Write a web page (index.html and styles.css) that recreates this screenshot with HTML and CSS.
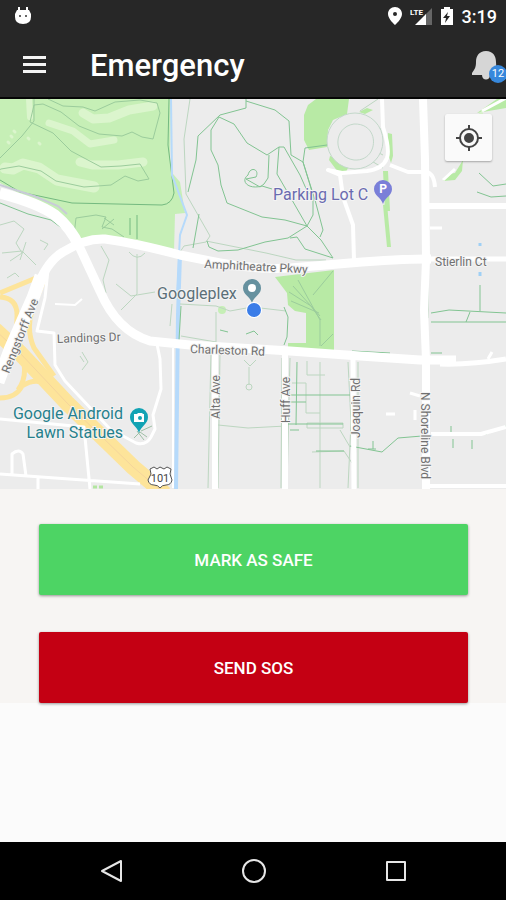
FILE: index.html
```html
<!DOCTYPE html>
<html lang="en">
<head>
  <meta charset="UTF-8">
  <meta name="viewport" content="width=device-width, initial-scale=1.0">
  <title>Emergency</title>
  <link rel="stylesheet" href="styles.css">
</head>
<body>
  <header>
    <div class="status">
      <svg class="droid" width="20" height="20" viewBox="0 0 20 20">
        <path d="M6 1v4M14 1v4" stroke="#fff" stroke-width="2"/>
        <path d="M4 4h12l2 4v3q0 7-8 7t-8-7V8z" fill="#fff"/>
        <circle cx="7" cy="10" r="1" fill="#333"/><circle cx="13" cy="10" r="1" fill="#333"/>
      </svg>
      <svg width="14" height="20" viewBox="0 0 14 20">
        <path d="M7 1C3 1 0 4 0 8c0 5 7 11 7 11s7-6 7-11c0-4-3-7-7-7zm0 5a2 2 0 1 1 0 4 2 2 0 0 1 0-4z" fill="#fff" fill-rule="evenodd"/>
      </svg>
      <svg class="signal" width="22" height="20" viewBox="0 0 22 20">
        <path d="M22 2v17H15V9z" fill="#666"/>
        <path d="M16 8v11H5z" fill="#fff"/>
        <text x="0" y="9">LTE</text>
      </svg>
      <svg width="14" height="20" viewBox="0 0 14 20">
        <path d="M4 1h6v2h3v16H1V3h3z" fill="#fff"/>
        <path d="M8 6l-5 6h3l-1 5 5-7H7z" fill="#262626"/>
      </svg>
      <span class="time">3:19</span>
    </div>
    <div class="toolbar">
      <button class="menu" aria-label="Menu"><i></i><i></i><i></i></button>
      <h1>Emergency</h1>
      <button class="bell" aria-label="Notifications">
        <svg width="28" height="30" viewBox="0 0 28 30">
          <path d="M14 1C7 1 4 6 4 12c0 5-1 7-4 11v2h10c0 6 8 6 8 0h10v-2c-3-3-4-6-4-11 0-6-3-11-10-11z" fill="#d6d6d6"/>
        </svg>
        <span class="badge">12</span>
      </button>
    </div>
  </header>

  <main>
    <div class="map">
      <svg class="tiles" viewBox="0 99 506 390">
        <rect y="99" width="506" height="390" fill="#ececec"/>

        <!-- parks -->
        <path d="M0 99h171l-1 60 3 15 7 8 5 31-10 1-1 38-40-9-34-6-23 4-8-17-16-14-31-15-22-12z" fill="#c6efb6"/>
        <g fill="#b8eaa5">
          <path d="M316 99h33l-2 15-14 6-5 10-1 17-18 3-5-10v-25l4-10z"/>
          <path d="M330 156l8 2 7 6h5l-4 8h-8l-9-12z"/>
          <path d="M275 277l59-7v81h-46v-8h18v-30l-11-2-7-6-1-12z"/>
          <path d="M359 112l8-4 6 2-8 4zM388 133l4 1 1 22-2 7-4-12zM383 171h5l2 40h-5zM383 205l4-1 4 43h-4z"/>
          <path d="M477 113l20-14h9v9zM463 160l-8 13-7 1-5 7 12-1 7-9z"/>
        </g>
        <path d="M468 128l14-18 4 14-12 6z" fill="#d9f3cd"/>
        <circle cx="222" cy="310" r="4" fill="#c6efb6"/>

        <!-- fairways -->
        <g fill="none" stroke="#dbf5cd" stroke-width="10" stroke-linecap="round" stroke-linejoin="round">
          <path d="M83 113l10 6 16-1 20-8 24-4" stroke-width="9"/>
          <path d="M49 123l24 8 17 13 24-4" stroke-width="7"/>
          <path d="M80 162l12 3h26l25-3" stroke-width="9"/>
          <path d="M5 168l8 1 10-5 16 4 18 12 37 7" stroke-width="11"/>
          <path d="M29 99l1 18" stroke-width="6"/>
          <path d="M8 142l1 1M11 136l1 1M14 131l1 1M28 138l1 1M39 143l1 1" stroke-width="3"/>
        </g>

        <!-- golf course outline and paths -->
        <g fill="none" stroke="#9bcc9c">
          <path d="M48 99l15 7 20 1 12 4 20-9 25-2 17 3 3 10-7 26-11-2-10-5-10 4-23-2-20-8-18-14-18-8-9 1-4 17 23 11 18 18 30 16 20-1 19-2 9 15-11 2-13-5-14 9-27 2-28-6-15-10-22-5-18 3-15 8M34 99v22l-12 15L0 158"/>
          <path d="M74 235l2-17 20-3 10 2-4 10 10 2 12 8M104 218l10 7M102 229l12-10"/>
          <path d="M289 292l22 14 10 14M291 301l28 12M293 286l27 30M298 280l22 40v26M333 271l-20 24M333 334l-12 12"/>
        </g>
        <path d="M0 180l20 12 52 11 90 2q10-1 12-12l-6-48 1-46M130 218v17M137 215v24" fill="none" stroke="#74ba80"/>

        <!-- waterways -->
        <path d="M171 99l1 76 15 40-7 20-3 60" fill="none" stroke="#b6dafb" stroke-width="2"/>
        <path d="M180 255l-2 60-2 174" fill="none" stroke="#b6dafb" stroke-width="4"/>

        <!-- foot paths, muted -->
        <g fill="none" stroke="#bcd6c0">
          <path d="M190 99l-6 40 2 55 24 42-4 6-22 4-8 12M206 241l60 12 30 7h30M0 225l14-4 10 8-8 14 6 10-12 8M2 253l20-2 14 14M20 260l6-18M40 240l8 4-4 6M7 278l8-5 4 4M101 246l8 14-6 20 3 13M137 254v40l-16 16M129 252q8 10 16 1M116 284l15 12 24-4M82 352l6 10-6 8M84 362l-4-6M172 304l-2 22"/>
          <path d="M180 304l36 2 14 5 22-4 34 4M216 312v32M181 336l35 6M211 352l-3 136M220 352l-2 136M282 358l-1 130M290 358l-3 130M244 360l6 6 6-6M249 367v18M218 425l30 3 38-2M348 362l3 60-3 66M358 362v126M292 383h14v30h14M307 361v14h18M320 362v126M307 428h36v-5h-36zM340 430l10 17M312 452l32-1 8 12"/>
          <path d="M373 129h8M375 151l8 4M370 160l13 8M360 111l18-12M428 280v38"/>
          <circle cx="249" cy="387" r="3"/>
        </g>
        <circle cx="355" cy="141" r="28" fill="#ececec" stroke="#c3d8ca"/>
        <path d="M354 124c-21 3-22 33 0 36 25 2 27-37 0-36z" fill="#ececec" stroke="#c3d8ca"/>

        <!-- foot paths, strong -->
        <g fill="none" stroke="#82c492">
          <path d="M246 99v9l-26 7-22 21-2 24-8 32M246 101l29 9 14 11 2 34 12 7 2-14 22-3M303 162l10 33v20l-6 11M303 162l12 38 8 30-3 7M219 117l15 7 13 19 20 12 12-8h5l16 28 8 18 5 2M219 117l-8 13v20l7 15 3 20 6 18 35 14 23 3 22 6M279 147l-2 27 30 52-19 12-23 4-27 8-20 1-9-4-2-6M307 226l14 14 12 18-28-9-8-12-7 1"/>
          <path d="M269 155l-1 23-4 6-4 3-14-8 10-2c4-8-6-11-8-2-8 6 0 15 14 11l10 3M199 214l-6 34M0 203l28 11 23 6 12 9"/>
          <path d="M284 307l4 10-1 20-3 8M181 306l-2 34M220 330l8 2M246 334l8-3 4 4M297 362l-1 63M290 395h60M290 402h16M316 451h28M350 446l32 6 16-14 24-2M373 441v8M368 449h8M431 313l18-3 57 3M431 322h75M470 312l-4 10M480 285v26M431 353h11M479 173l14 13 13-2M477 192l14 5 15-1M431 434h55l20-8M451 436v-10M453 439v9M472 440v9M288 424h55M290 430h9M352 351l38 2"/>
        </g>

        <!-- highway 101 -->
        <g fill="none" stroke="#fde49a" stroke-width="5">
          <path d="M0 293l36-15M0 297q18 1 17 20l-1 32M46 275l-14 35q-6 20 2 38l20 28M0 398q16 0 22-12 14-9 26-1l20 17M20 350q10 24-2 40"/>
          <path d="M-5 330l25 23 47 50 33 32 33 32 32 27" stroke-width="16"/>
          <path d="M-5 330l25 23 47 50 33 32 33 32 32 27" stroke="#f5d59c" stroke-width="1"/>
        </g>

        <!-- small streets -->
        <g fill="none" stroke="#fff" stroke-width="3" stroke-linejoin="round">
          <path d="M48 270l-3 28-8 33 17 2 1 32 10 16 45 48 26 14q10 3 15-6l4-8-2-14 8-26-1-30-3-15M0 419l84 8 6 62M0 474l55 4 85 6M12 476v-22q7-6 11 0l3 22M38 476v13"/>
          <path d="M55 304l20 1 7-6" stroke-width="2"/>
          <path d="M382 99l1 28q7 22 4 31-4 11-20 13l-25 2-14-3 12 5 3 22 10 28 1 35M390 165l18 7h18q8 1 9 15" stroke-width="4"/>
          <path d="M426 206h80" stroke-width="6"/>
          <path d="M430 228h12M420 396l-10-3M415 410v10M386 414h9M488 359l4-7M443 180l12-11M482 111l24-13"/>
          <path d="M431 434h50l25-7M430 486h76" stroke-width="4"/>
          <path d="M215 350v139M285 352v137" stroke-width="6"/>
          <path d="M353 358l1 131" stroke-width="5"/>
          <path d="M173 348v140" stroke-width="2"/>
        </g>

        <!-- main roads -->
        <path d="M0 185l34 11 24 10 9 8" fill="none" stroke="#c9cbd8" stroke-width="2"/>
        <g fill="none" stroke="#fff" stroke-width="9" stroke-linejoin="round">
          <path d="M0 193q38 10 55 22 16 13 24 31l21 45q17 40 50 50l40 4 100 6 70 5 60 4h36"/>
          <path d="M0 193q38 10 55 22 16 13 24 31" stroke-width="11"/>
          <path d="M440 364q30 1 66-5" stroke-width="5"/>
          <path d="M-2 382l12-32 23-52q12-36 30-46 22-14 42-13 30 4 75 16l40 8q38 7 70 5l60-5q50-4 75-4h6"/>
          <path d="M-2 382l12-32 23-52 8-22" stroke-width="13"/>
          <path d="M430 259h76" stroke-width="5"/>
          <path d="M423 99l2 60 1 101-2 50 2 50v129" stroke-width="8"/>
        </g>
        <path d="M480 243v3M480 272v4" stroke="#9fd0f5" stroke-width="3"/>
        <path d="M93 487h12" stroke="#b3e5a0" stroke-width="3" stroke-dasharray="4 2"/>

        <!-- street names -->
        <g class="street">
          <text x="204" y="268" transform="rotate(3 204 268)">Amphitheatre Pkwy</text>
          <text x="190" y="353" transform="rotate(2 190 353)">Charleston Rd</text>
          <text x="57" y="343" transform="rotate(-2 57 343)">Landings Dr</text>
          <text x="435" y="266">Stierlin Ct</text>
          <text x="9" y="374" transform="rotate(-68 9 374)">Rengstorff Ave</text>
          <text x="220" y="419" transform="rotate(-90 220 419)">Alta Ave</text>
          <text x="290" y="423" transform="rotate(-90 290 423)">Huff Ave</text>
          <text x="360" y="438" transform="rotate(-90 360 438)">Joaquin Rd</text>
          <text x="421" y="392" transform="rotate(90 421 392)">N Shoreline Blvd</text>
        </g>

        <!-- places -->
        <g class="place">
          <text x="157" y="299" fill="#5b6f78">Googleplex</text>
          <text x="273" y="200" fill="#6a6bb0">Parking Lot C</text>
          <text x="123" y="419" fill="#26808c" text-anchor="end">Google Android</text>
          <text x="123" y="438" fill="#26808c" text-anchor="end">Lawn Statues</text>
        </g>
        <path d="M252 279a9 9 0 0 0-9 9c0 7 7 8 9 15 2-7 9-8 9-15a9 9 0 0 0-9-9z" fill="#66919f"/>
        <circle cx="252" cy="288" r="4" fill="#fff"/>
        <circle cx="254" cy="310" r="8" fill="#fff"/>
        <circle cx="254" cy="310" r="7" fill="#3b7de8"/>
        <path d="M383 180a9 9 0 0 0-9 9c0 7 7 8 9 15 2-7 9-8 9-15a9 9 0 0 0-9-9z" fill="#7a7fd8"/>
        <text class="pin" x="383" y="193">P</text>
        <path d="M134 438l6-6 7 5M141 431l11-5M137 431l7 9" fill="none" stroke="#9fbfa6"/>
        <path d="M139 408a9 9 0 0 0-9 9c0 7 7 9 9 16 2-7 9-9 9-16a9 9 0 0 0-9-9z" fill="#12a3b4"/>
        <path d="M134 414h3l1-1h4l1 1h1v8h-10z" fill="#fff"/>
        <circle cx="140" cy="418" r="2" fill="#12a3b4"/>
        <path d="M150 469l4-2 3 2 3-2 4 2 3-2 4 2-1 5 2 6q-1 5-6 5-4 0-6 3-2-3-6-3-5 0-6-5l3-6z" fill="#fff" stroke="#555"/>
        <text class="shield" x="160" y="482">101</text>
      </svg>
      <button class="locate" aria-label="My location">
        <svg width="26" height="26" viewBox="0 0 26 26" fill="none" stroke="#444" stroke-width="2">
          <circle cx="13" cy="13" r="9"/>
          <circle cx="13" cy="13" r="4" fill="#444"/>
          <path d="M13 0v4M13 22v4M0 13h4M22 13h4"/>
        </svg>
      </button>
    </div>

    <div class="actions">
      <button class="safe">MARK AS SAFE</button>
      <button class="sos">SEND SOS</button>
    </div>
  </main>

  <nav>
    <button aria-label="Back">
      <svg width="24" height="24" viewBox="0 0 24 24"><path d="M21 2v20L2 12z"/></svg>
    </button>
    <button aria-label="Home">
      <svg width="24" height="24" viewBox="0 0 24 24"><circle cx="12" cy="12" r="11"/></svg>
    </button>
    <button aria-label="Recent apps">
      <svg width="24" height="24" viewBox="0 0 24 24"><path d="M3 3h18v18H3z"/></svg>
    </button>
  </nav>
</body>
</html>
```
FILE: styles.css
```css
* {
  box-sizing: border-box;
}

body {
  margin: 0;
  min-height: 100vh;
  display: flex;
  flex-direction: column;
  background-color: #fbfbfb;
  font-family: Roboto, sans-serif;
}

button {
  border: 0;
  padding: 0;
  background: none;
  font-family: inherit;
  cursor: pointer;
}

svg {
  display: block;
}

header {
  background-color: #272727;
  border-bottom: 2px solid #050505;
  color: #fff;
}

.status {
  display: flex;
  align-items: center;
  gap: 8px;
  height: 32px;
  padding: 0 9px 0 13px;
}

.droid {
  margin-right: auto;
}

.signal text {
  font-size: 8px;
  font-weight: 700;
  fill: #fff;
  stroke: #272727;
  stroke-width: 2px;
  paint-order: stroke;
}

.time {
  font-size: 18px;
  font-weight: 500;
}

.toolbar {
  display: flex;
  align-items: center;
  height: 65px;
  padding: 0 6px 0 23px;
}

.menu {
  display: flex;
  flex-direction: column;
  gap: 4px;
  width: 23px;
}

.menu i {
  height: 3px;
  background-color: #f4f4f4;
}

h1 {
  flex: 1;
  margin: 0;
  padding: 2px 0 0 44px;
  font-size: 31px;
  line-height: 36px;
  font-weight: 500;
}

.bell {
  position: relative;
}

.badge {
  position: absolute;
  right: -7px;
  bottom: -3px;
  width: 18px;
  height: 18px;
  border-radius: 50%;
  background-color: #3788dc;
  color: #fff;
  font-size: 11px;
  line-height: 18px;
  text-align: center;
}

.map {
  position: relative;
}

.tiles {
  width: 100%;
  height: auto;
}

.street text {
  font-size: 12px;
  fill: #707070;
  stroke: #f4f4f4;
  stroke-width: 2px;
  paint-order: stroke;
}

.place text {
  font-size: 16px;
  stroke: #f4f4f4;
  stroke-width: 2px;
  paint-order: stroke;
}

.pin {
  font-size: 12px;
  font-weight: 700;
  fill: #fff;
  text-anchor: middle;
}

.shield {
  font-size: 11px;
  fill: #444;
  text-anchor: middle;
}

.locate {
  position: absolute;
  top: 15px;
  right: 14px;
  display: flex;
  align-items: center;
  justify-content: center;
  width: 47px;
  height: 47px;
  border-radius: 2px;
  background-color: #fafafa;
  box-shadow: 0 1px 2px rgba(0,0,0,.3);
}

main {
  flex: 1;
}

.actions {
  display: flex;
  flex-direction: column;
  gap: 37px;
  padding: 35px 38px 0 39px;
  background-color: #f7f5f3;
}

.actions button {
  height: 71px;
  border-radius: 2px;
  box-shadow: 0 1px 3px rgba(0,0,0,.4);
  color: #fff;
  font-size: 17px;
  font-weight: 500;
}

.actions .safe {
  background-color: #4dd464;
}

.actions .sos {
  background-color: #c40013;
}

nav {
  display: flex;
  align-items: center;
  justify-content: space-between;
  height: 58px;
  padding: 0 98px 0 100px;
  background-color: #000;
}

nav svg {
  fill: none;
  stroke: #e6e6e6;
  stroke-width: 2px;
  stroke-linejoin: round;
}
```
